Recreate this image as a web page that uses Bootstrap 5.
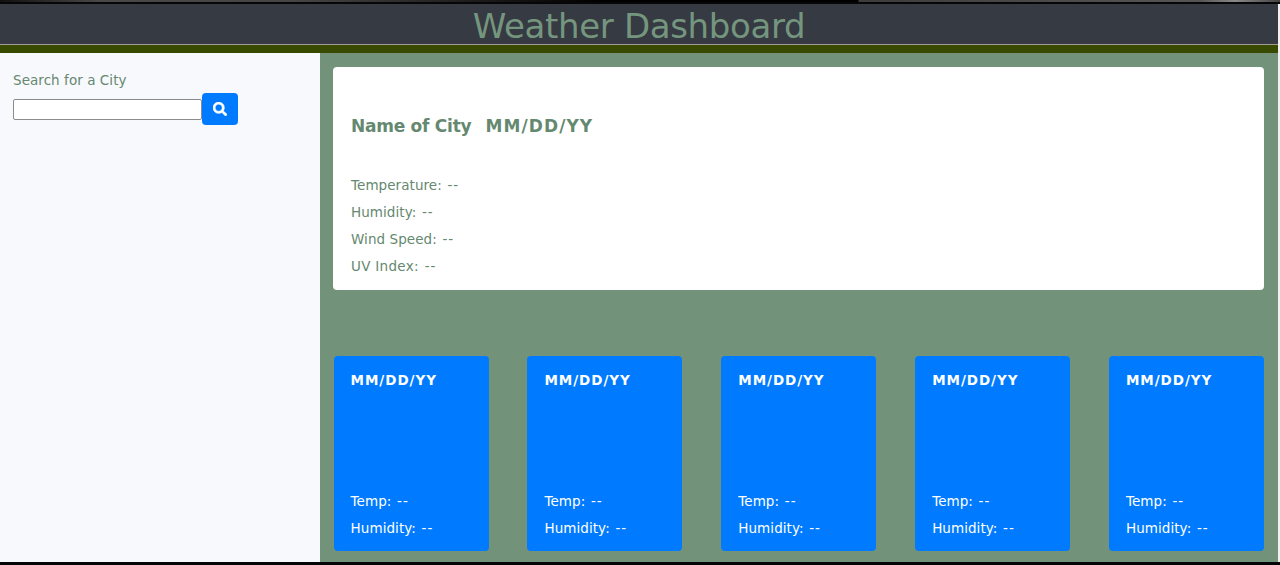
<!DOCTYPE html>
<html lang="en">
<head>
<meta charset="utf-8">
<meta name="viewport" content="width=device-width, initial-scale=1">
<title>Weather Dashboard</title>
<link href="https://cdn.jsdelivr.net/npm/bootstrap@5.3.0/dist/css/bootstrap.min.css" rel="stylesheet">
<style>
  :root { --sage: #73927a; --blue: #007bff; --ink: #658870; }
  body { font-family: "DejaVu Sans", Verdana, sans-serif; font-size: 13.5px; line-height: 20px; color: var(--ink); background: #000; }
  .page { height: 565px; border-bottom: 3px solid #050507; background: #f1f1f1; padding-right: 2px; }
  .top-edge { height: 4px; margin-right: -2px; background:
    linear-gradient(#0000 2px, #060606 2px),
    linear-gradient(90deg, #111 0, #484848 100px, #444 300px, #000 600px, #000 858px, #3c3c3c 859px, #555 1200px, #888 1235px, #444); }
  .masthead { height: 49px; background: #363a42; }
  .masthead h1 { height: 40px; line-height: 44px; font-size: 34px; font-weight: 400; letter-spacing: -.35px; color: #75967e; }
  .stripe { height: 9px; background: #384900; border-top: 1px solid #a39b95; }
  .search-pane { width: 320px; background: #f8f9fc; padding: 17px 13px; }
  .search-pane label { letter-spacing: .06px; margin-bottom: 3px; }
  .city-input { width: 189px; height: 21px; border: 1px solid #8b8b8b; border-radius: 2px; background: #fff; }
  .btn-search { width: 36px; height: 32px; background: var(--blue); border-radius: 4px; }
  .results { background: var(--sage); padding: 14px 14px 11px 13px; }
  .current { height: 223px; border-radius: 4px; padding: 49px 18px 0; }
  .current h2 { font-size: 17px; line-height: 20px; font-weight: 700; margin-bottom: 39px; gap: 14px; }
  .city-name { letter-spacing: -.25px; }
  .city-date { letter-spacing: 1.1px; }
  .reading { height: 27px; letter-spacing: .06px; }
  .value { letter-spacing: 1px; margin-left: 1.3px; }
  .uv { letter-spacing: .3px; }
  .forecast { margin: 66px 0 0 .6px; }
  .day { width: 155px; height: 195px; background: var(--blue); border-radius: 4px; padding: 14px 17px 6px; }
  .day h3 { font-size: 13.5px; line-height: 20px; font-weight: 700; letter-spacing: .95px; }
</style>
</head>
<body>
<div class="page d-flex flex-column overflow-hidden">
  <div class="top-edge flex-shrink-0"></div>
  <header class="masthead flex-shrink-0">
    <h1 class="text-center mb-0">Weather Dashboard</h1>
    <div class="stripe"></div>
  </header>
  <main class="d-flex flex-grow-1">
    <aside class="search-pane flex-shrink-0">
      <label for="city" class="d-block">Search for a City</label>
      <div class="d-flex align-items-center">
        <input id="city" class="city-input p-1" type="text">
        <button class="btn btn-search p-0 border-0 d-flex align-items-center justify-content-center" type="button" aria-label="Search">
          <svg width="14" height="14" viewBox="0 0 512 512" fill="#fff" stroke="#fff" stroke-width="18"><path d="M505 442.7L405.300 343c-4.500-4.500-10.600-7-17-7H372c27.600-35.300 44-79.700 44-128C416 93.100 322.900 0 208 0S0 93.100 0 208s93.100 208 208 208c48.300 0 92.700-16.400 128-44v16.300c0 6.400 2.500 12.500 7 17l99.700 99.700c9.400 9.400 24.600 9.400 33.900 0l28.300-28.300c9.400-9.400 9.400-24.600.1-34zM208 336c-70.700 0-128-57.200-128-128 0-70.700 57.200-128 128-128 70.700 0 128 57.200 128 128 0 70.700-57.200 128-128 128z"/></svg>
        </button>
      </div>
    </aside>
    <section class="results flex-grow-1">
      <div class="current bg-white">
        <h2 class="d-flex"><span class="city-name">Name of City</span><span class="city-date">MM/DD/YY</span></h2>
        <div class="reading">Temperature: <span class="value">--</span></div>
        <div class="reading">Humidity: <span class="value">--</span></div>
        <div class="reading">Wind Speed: <span class="value">--</span></div>
        <div class="reading uv">UV Index: <span class="value">--</span></div>
      </div>
      <div class="forecast d-flex justify-content-between text-white">
        <div class="day d-flex flex-column"><h3 class="mb-auto">MM/DD/YY</h3><div class="reading">Temp: <span class="value">--</span></div><div class="reading">Humidity: <span class="value">--</span></div></div>
        <div class="day d-flex flex-column"><h3 class="mb-auto">MM/DD/YY</h3><div class="reading">Temp: <span class="value">--</span></div><div class="reading">Humidity: <span class="value">--</span></div></div>
        <div class="day d-flex flex-column"><h3 class="mb-auto">MM/DD/YY</h3><div class="reading">Temp: <span class="value">--</span></div><div class="reading">Humidity: <span class="value">--</span></div></div>
        <div class="day d-flex flex-column"><h3 class="mb-auto">MM/DD/YY</h3><div class="reading">Temp: <span class="value">--</span></div><div class="reading">Humidity: <span class="value">--</span></div></div>
        <div class="day d-flex flex-column"><h3 class="mb-auto">MM/DD/YY</h3><div class="reading">Temp: <span class="value">--</span></div><div class="reading">Humidity: <span class="value">--</span></div></div>
      </div>
    </section>
  </main>
</div>
<script src="https://cdn.jsdelivr.net/npm/bootstrap@5.3.0/dist/js/bootstrap.bundle.min.js"></script>
</body>
</html>
